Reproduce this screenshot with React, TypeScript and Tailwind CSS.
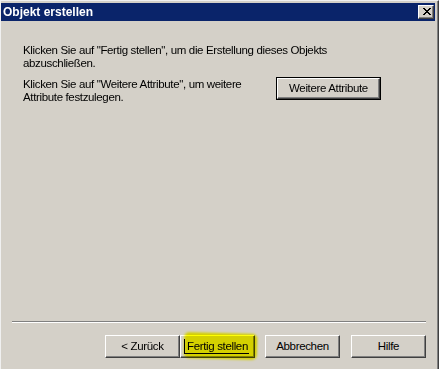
import React from "react";

function CloseGlyph() {
  const rows = [
    "XX....XX",
    ".XX..XX.",
    "..XXXX..",
    "...XX...",
    "..XXXX..",
    ".XX..XX.",
    "XX....XX",
  ];
  return (
    <svg width="8" height="7" viewBox="0 0 8 7" shapeRendering="crispEdges">
      {rows.flatMap((r, y) =>
        r.split("").map((c, x) =>
          c === "X" ? <rect key={`${x}-${y}`} x={x} y={y} width="1" height="1" fill="#000" /> : null
        )
      )}
    </svg>
  );
}

function Btn({ children, className = "" }: { children: React.ReactNode; className?: string }) {
  return (
    <div
      className={`relative h-[23px] flex items-center justify-center bg-[#d4d0c8] border-t border-l border-white border-b border-r border-b-[#404040] border-r-[#404040] shadow-[inset_-1px_-1px_0_#808080] text-black ${className}`}
    >
      {children}
    </div>
  );
}

export default function App() {
  return (
    <div
      className="w-[439px] h-[369px] bg-[#d4d0c8] border-t border-l border-t-[#f0f0f0] border-l-[#f0f0f0] border-r border-r-[#404040] flex text-[11.5px] leading-[13px] text-black tracking-[-0.35px]"
      style={{ fontFamily: '"Liberation Sans", Arial, sans-serif' }}
    >
      <div className="flex-1 flex flex-col border-r border-r-[#808080] pt-[2px]">
        {/* title bar */}
        <div className="h-[18px] mr-[2px] bg-[#0a246a] flex items-center justify-between pl-[2px] pr-[1px]">
          <span className="text-white font-bold text-[12px] tracking-normal leading-[18px]">Objekt erstellen</span>
          <div className="w-[16px] h-[14px] bg-[#d4d0c8] border-t border-l border-white border-b border-r border-b-[#404040] border-r-[#404040] shadow-[inset_-1px_-1px_0_#808080] flex items-start pl-[4px] pt-[2px]">
            <CloseGlyph />
          </div>
        </div>

        {/* content */}
        <div className="pl-[22px] pt-[23px] flex flex-col">
          <p>
            Klicken Sie auf "Fertig stellen", um die Erstellung dieses Objekts
            <br />
            abzuschließen.
          </p>
          <div className="flex items-start mt-[8px]">
            <p className="w-[253px]">
              Klicken Sie auf "Weitere Attribute", um weitere
              <br />
              Attribute festzulegen.
            </p>
            <div className="mt-[-1px] w-[105px] h-[23px] border border-black">
              <div className="w-full h-full flex items-center justify-center bg-[#d4d0c8] border-t border-l border-white border-b border-r border-b-[#404040] border-r-[#404040] shadow-[inset_-1px_-1px_0_#808080]">
                Weitere Attribute
              </div>
            </div>
          </div>
        </div>

        <div className="flex-1" />

        {/* separator */}
        <div className="mx-[11px] h-[2px] border-t border-t-[#808080] border-b border-b-white" />

        {/* buttons */}
        <div className="flex justify-end mr-[11px] mt-[12px] mb-[11px]">
          <Btn className="w-[75px]">&lt; Zurück</Btn>
          <Btn className="w-[75px]">
            <span className="relative">Fertig stellen</span>
            <div className="absolute left-[3px] top-[3px] right-[5px] bottom-[3px] border-l border-b border-black pointer-events-none" />
            <div className="absolute left-[3px] top-[-3px] w-[73px] h-[26px] bg-[#ffff00] mix-blend-multiply rounded-[5px] rotate-[1.5deg] blur-[0.8px] pointer-events-none" />
          </Btn>
          <Btn className="w-[75px] ml-[10px]">Abbrechen</Btn>
          <Btn className="w-[75px] ml-[11px]">Hilfe</Btn>
        </div>
      </div>
    </div>
  );
}
